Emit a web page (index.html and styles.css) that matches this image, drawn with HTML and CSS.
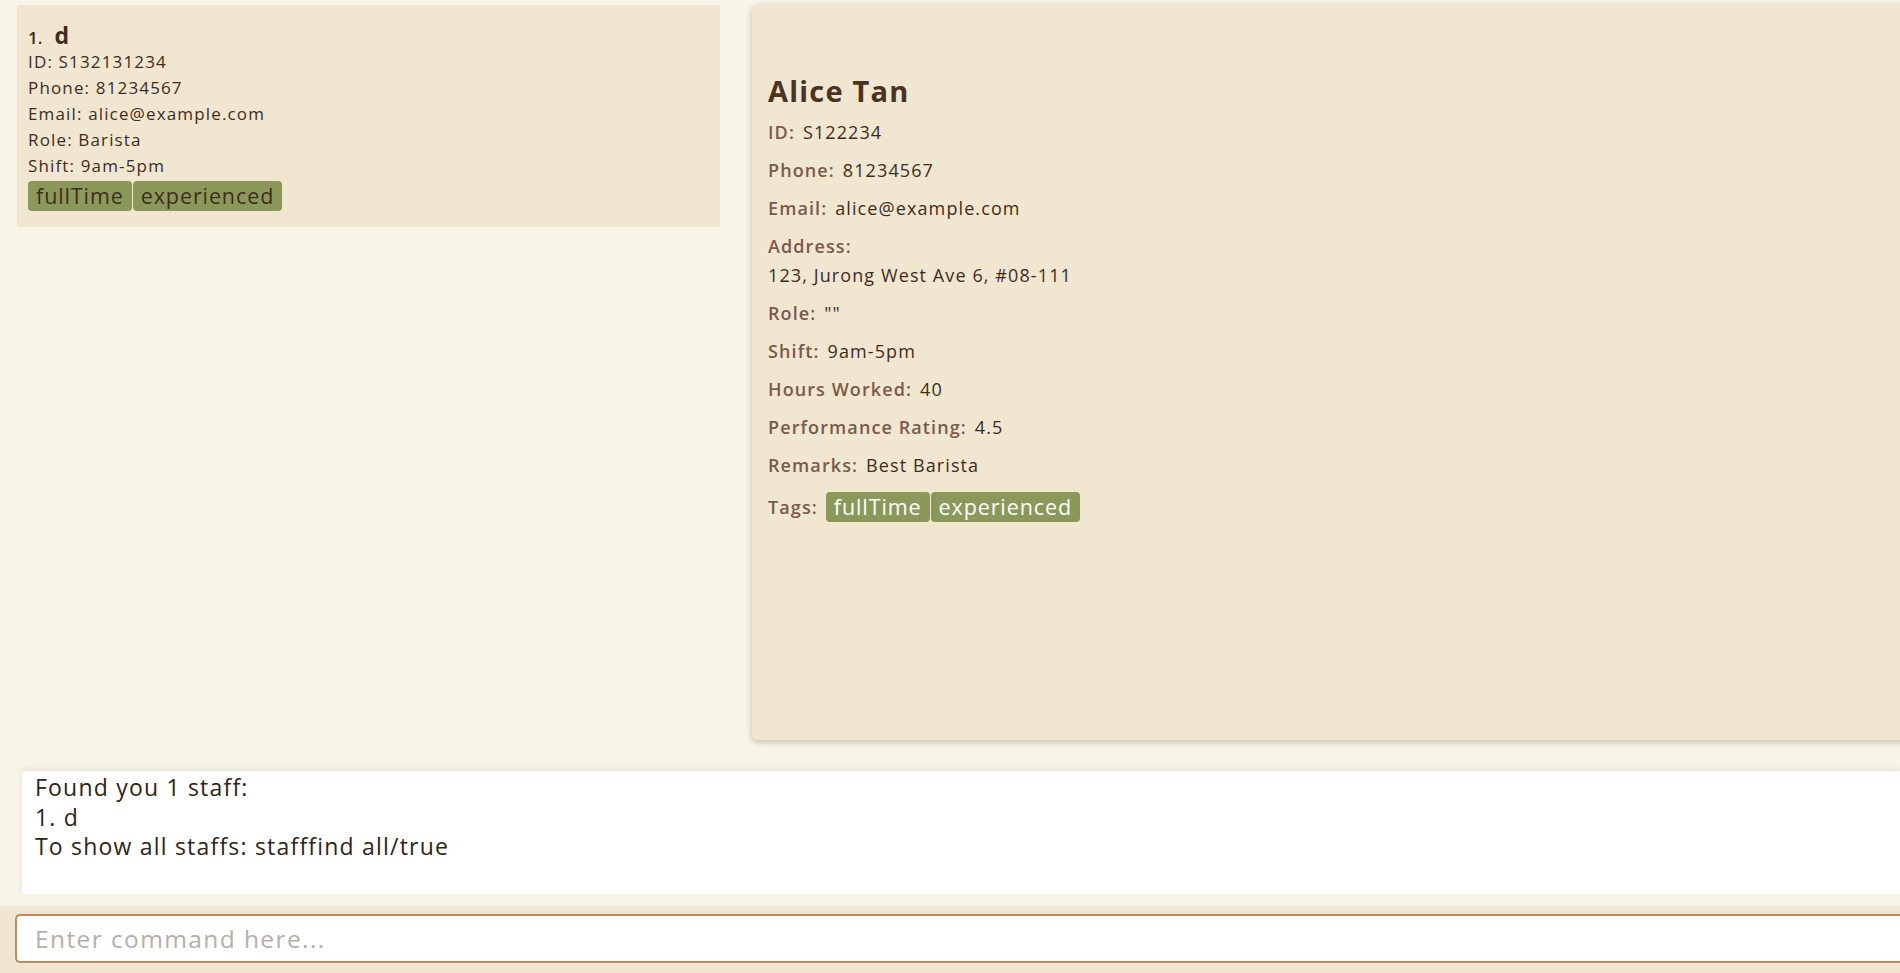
FILE: index.html
```html
<!DOCTYPE html>
<html lang="en">
<head>
<meta charset="utf-8">
<title>Staff</title>
<link rel="stylesheet" href="styles.css">
</head>
<body>
<div class="app">
  <div class="top">
    <div class="list">
      <div class="card">
        <div class="card-title"><span class="idx">1.</span><span class="card-name">d</span></div>
        <div class="line">ID: S132131234</div>
        <div class="line">Phone: 81234567</div>
        <div class="line">Email: alice@example.com</div>
        <div class="line">Role: Barista</div>
        <div class="line">Shift: 9am-5pm</div>
        <div class="tags">
          <span class="tag tag-dark">fullTime</span><span class="tag tag-dark">experienced</span>
        </div>
      </div>
    </div>
    <div class="detail">
      <h1 class="detail-name">Alice Tan</h1>
      <div class="row"><span class="label">ID:</span><span class="value">S122234</span></div>
      <div class="row"><span class="label">Phone:</span><span class="value">81234567</span></div>
      <div class="row"><span class="label">Email:</span><span class="value">alice@example.com</span></div>
      <div class="row row-col"><span class="label">Address:</span><span class="value">123, Jurong West Ave 6, #08-111</span></div>
      <div class="row"><span class="label">Role:</span><span class="value">""</span></div>
      <div class="row"><span class="label">Shift:</span><span class="value">9am-5pm</span></div>
      <div class="row"><span class="label">Hours Worked:</span><span class="value">40</span></div>
      <div class="row"><span class="label">Performance Rating:</span><span class="value">4.5</span></div>
      <div class="row"><span class="label">Remarks:</span><span class="value">Best Barista</span></div>
      <div class="row row-tags"><span class="label">Tags:</span>
        <span class="tags"><span class="tag tag-light">fullTime</span><span class="tag tag-light">experienced</span></span>
      </div>
    </div>
  </div>
  <div class="result-wrap">
    <div class="result">Found you 1 staff:<br>1. d<br>To show all staffs: stafffind all/true</div>
  </div>
  <div class="command-bar">
    <input class="command" type="text" placeholder="Enter command here...">
  </div>
</div>
</body>
</html>
```
FILE: styles.css
```css
html, body {
  margin: 0;
  padding: 0;
}
body {
  background: #f8f4e8;
  font-family: "Open Sans", "Noto Sans", sans-serif;
  color: #3d2d1e;
  overflow: hidden;
}
.app {
  width: 1900px;
  height: 973px;
  display: flex;
  flex-direction: column;
  overflow: hidden;
}
.top {
  height: 740px;
  display: flex;
  flex: 0 0 auto;
}
.list {
  flex: 0 0 735px;
  padding: 5px 0 0 17px;
  box-sizing: border-box;
}
.card {
  width: 703px;
  height: 222px;
  box-sizing: border-box;
  background: #f1e6cf;
  padding: 17px 11px 15px;
}
.card-title {
  display: flex;
  align-items: baseline;
  gap: 12px;
  height: 26px;
  line-height: 26px;
  margin-bottom: 0.5px;
}
.idx {
  font-size: 17px;
  font-weight: 600;
}
.card-name {
  font-size: 23px;
  font-weight: 700;
}
.line {
  font-size: 17px;
  line-height: 26.2px;
  letter-spacing: 1.15px;
}
.tags {
  display: flex;
  gap: 1px;
}
.card .tags {
  margin-top: 1px;
}
.tag {
  display: inline-block;
  height: 30px;
  line-height: 30px;
  padding: 0 8px;
  border-radius: 4px;
  background: #8a995a;
  font-size: 21.5px;
  letter-spacing: 0.9px;
}
.tag-dark {
  color: #3d2d1e;
}
.tag-light {
  color: #ffffff;
}
.detail {
  flex: 0 0 1200px;
  margin: 5px 0 0 17px;
  height: 735px;
  box-sizing: border-box;
  background: #f1e6cf;
  border-radius: 6px;
  box-shadow: 0 2px 6px rgba(60, 40, 20, 0.28);
  padding: 68px 0 0 16px;
}
.detail-name {
  margin: 0 0 9px 0;
  font-size: 29px;
  line-height: 36px;
  font-weight: 700;
  letter-spacing: 1.2px;
  color: #4a3322;
}
.row {
  display: flex;
  align-items: baseline;
  gap: 8px;
  font-size: 18px;
  line-height: 29px;
  margin-bottom: 9px;
  letter-spacing: 1.1px;
}
.row-col {
  flex-direction: column;
  gap: 0;
}
.label {
  font-weight: 600;
  color: #7a5a4b;
  letter-spacing: 1.1px;
}
.value {
  color: #3d2d1e;
}
.row-tags {
  align-items: center;
  margin-top: 12px;
}
.result-wrap {
  padding: 31px 0 12px 22px;
  flex: 0 0 auto;
}
.result {
  height: 123px;
  box-sizing: border-box;
  background: #ffffff;
  border-radius: 3px 0 0 3px;
  box-shadow: 0 -2px 5px rgba(80, 60, 30, 0.10);
  padding: 2px 0 0 13px;
  font-size: 23px;
  line-height: 29.5px;
  letter-spacing: 1.2px;
  color: #2e2418;
}
.command-bar {
  flex: 1 1 auto;
  background: #f1e6cf;
  padding: 8px 0 0 15px;
}
.command {
  display: block;
  width: 1900px;
  height: 49px;
  box-sizing: border-box;
  border: 2px solid #c08a5a;
  border-right: none;
  border-radius: 5px 0 0 5px;
  background: #ffffff;
  padding: 0 0 0 18px;
  font-family: "Open Sans", "Noto Sans", sans-serif;
  font-size: 24.5px;
  letter-spacing: 1.4px;
  outline: none;
}
.command::placeholder {
  color: #b3b0ab;
}
```
